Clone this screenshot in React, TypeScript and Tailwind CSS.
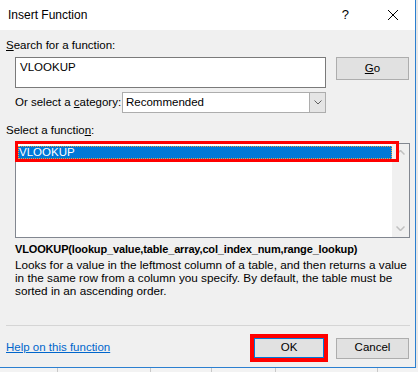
import React from "react";

const font = { fontFamily: '"Liberation Sans", Arial, sans-serif' };

export default function App() {
  return (
    <div className="relative w-[418px] h-[372px] bg-[#e8e8e8] overflow-hidden text-[11.5px] text-black whitespace-nowrap" style={font}>
      {/* spreadsheet strip below */}
      <div className="absolute left-0 top-[368px] w-[418px] h-[4px] bg-[#f3f3f3] flex">
        <div className="w-[58px] border-r border-[#c8c8c8]" />
        <div className="w-[93px] border-r border-[#c8c8c8]" />
        <div className="w-[61px] border-r border-[#c8c8c8]" />
        <div className="w-[64px] border-r border-[#c8c8c8]" />
        <div className="w-[102px] border-r border-[#c8c8c8]" />
      </div>
      <div className="w-[416px] h-[368px] border-r border-b border-[#2b7fd0] bg-[#f0f0f0] flex flex-col">
        {/* title bar */}
        <div className="h-[30px] bg-white flex items-center shrink-0">
          <span className="ml-[8px] text-[12px]">Insert Function</span>
          <span className="ml-auto mr-[38px] text-[13px]">?</span>
          <svg width="12" height="12" viewBox="0 0 12 12" className="mr-[16px]">
            <path d="M1 1 L11 11 M11 1 L1 11" stroke="#000" strokeWidth="1" />
          </svg>
        </div>
        {/* body */}
        <div className="flex flex-col pl-[6px] pr-[6px]">
          <div className="mt-[7px] h-[16px] leading-[16px]"><span className="underline">S</span>earch for a function:</div>
          <div className="mt-[4px] flex h-[31px]">
            <div className="ml-[9px] w-[311px] h-[31px] bg-white border border-[#7a7a7a] pl-[4px] leading-[18px]">VLOOKUP</div>
            <div className="ml-[10px] w-[73px] h-[23px] bg-[#e1e1e1] border border-[#adadad] flex items-center justify-center"><span><span className="underline">G</span>o</span></div>
          </div>
          <div className="mt-[4px] flex items-center h-[21px]">
            <div className="ml-[9px] w-[107px]">Or select a <span className="underline">c</span>ategory:</div>
            <div className="w-[204px] h-[21px] bg-white border border-[#adadad] flex">
              <div className="flex-1 pl-[3px] leading-[19px]">Recommended</div>
              <div className="w-[16px] bg-[#e5e5e5] border-l border-[#adadad] flex items-center justify-center">
                <svg width="8" height="5" viewBox="0 0 8 5"><path d="M0.5 0.5 L4 4 L7.5 0.5" stroke="#606060" fill="none" strokeWidth="1" /></svg>
              </div>
            </div>
          </div>
          <div className="mt-[9px] h-[16px] leading-[16px]">Select a functio<span className="underline">n</span>:</div>
          <div className="relative mt-[5px] ml-[9px] w-[395px] h-[95px] bg-white border border-[#828790] flex">
            <div className="flex-1 pt-[2px] pl-[2px]">
              <div className="h-[13px] bg-[#0078d7] text-white leading-[13px] outline-dotted outline-1 outline-[#f0a040] -outline-offset-1 pl-[1px]">VLOOKUP</div>
            </div>
            <div className="w-[17px] bg-[#f0f0f0] flex flex-col items-center justify-between py-[6px]">
              <svg width="9" height="5" viewBox="0 0 9 5"><path d="M0.5 4.5 L4.5 0.5 L8.5 4.5" stroke="#c0c0c0" fill="none" strokeWidth="1.5" /></svg>
              <svg width="9" height="5" viewBox="0 0 9 5"><path d="M0.5 0.5 L4.5 4.5 L8.5 0.5" stroke="#c0c0c0" fill="none" strokeWidth="1.5" /></svg>
            </div>
            <div className="absolute left-[-1px] top-[-3px] w-[384px] h-[21px] border-[3px] border-[#ff0000]" />
          </div>
          <div className="mt-[3px] ml-[9px] font-bold h-[16px] leading-[16px] text-[11px] tracking-[-0.15px]">VLOOKUP(lookup_value,table_array,col_index_num,range_lookup)</div>
          <div className="mt-[1px] ml-[9px] leading-[13px] flex flex-col text-[11.75px]">
            <span className="h-[13px]">Looks for a value in the leftmost column of a table, and then returns a value</span>
            <span className="h-[13px]">in the same row from a column you specify. By default, the table must be</span>
            <span className="h-[13px]">sorted in an ascending order.</span>
          </div>
          <div className="mt-[28px] h-[1px] bg-[#d5d5d5] w-[404px]" />
          <div className="flex items-center mt-[8px] h-[28px]">
            <span className="text-[#0066cc] underline">Help on this function</span>
            <div className="ml-auto mr-[1px] w-[78px] h-[28px] border-[4px] border-[#ff0000] flex">
              <div className="flex-1 bg-[#e1e1e1] border border-[#0078d7] flex items-center justify-center">OK</div>
            </div>
            <div className="ml-[7px] w-[73px] h-[21px] bg-[#e1e1e1] border border-[#adadad] flex items-center justify-center">Cancel</div>
          </div>
        </div>
      </div>
    </div>
  );
}
